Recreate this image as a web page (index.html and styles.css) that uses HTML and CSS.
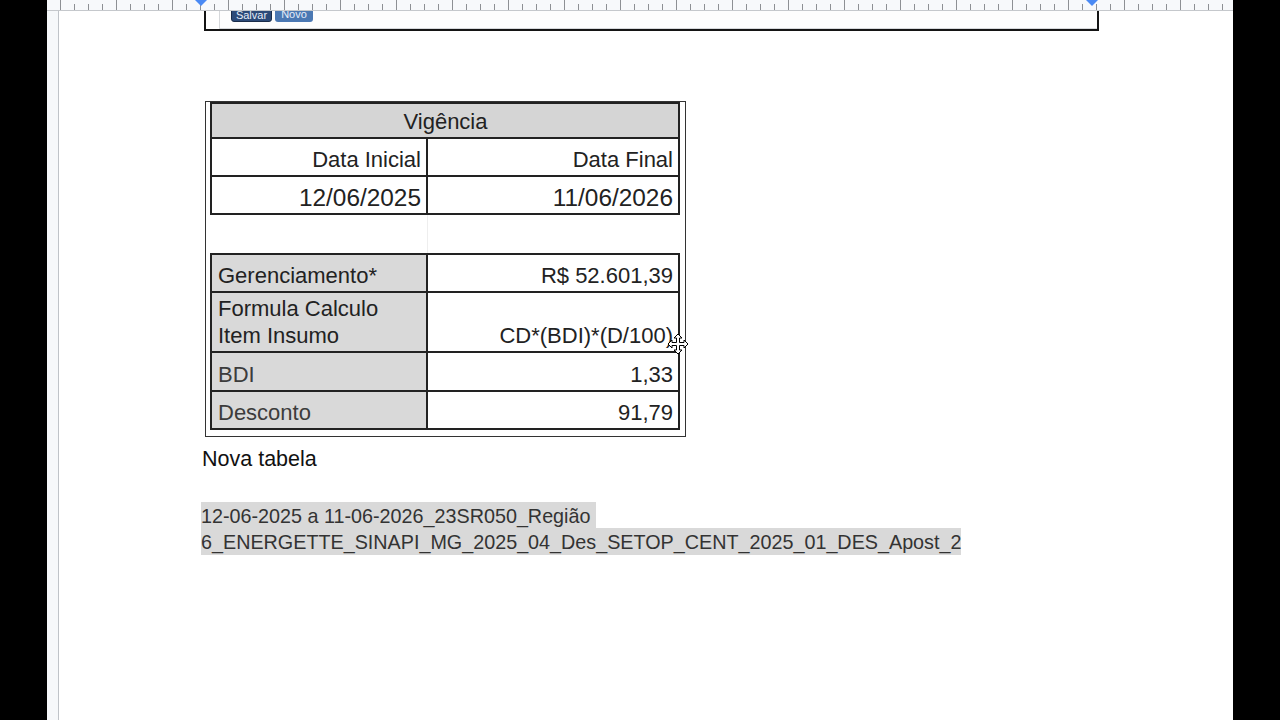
FILE: index.html
```html
<!DOCTYPE html>
<html lang="pt-BR">
<head>
<meta charset="utf-8">
<title>Documento</title>
<link rel="stylesheet" href="styles.css">
</head>
<body>
<div class="screen">
  <div class="side"></div>
  <div class="app">
    <div class="hruler">
      <span class="marker marker-left"></span>
      <span class="marker marker-right"></span>
    </div>
    <div class="workspace">
      <div class="vruler"></div>
      <div class="canvas">
        <div class="formbox">
          <div class="formbox-inner">
            <span class="btn btn-save">Salvar</span>
            <span class="btn btn-new">Novo</span>
          </div>
        </div>

        <div class="frame">
          <div class="grid">
            <div class="c head">Vigência</div>
            <div class="c r">Data Inicial</div>
            <div class="c r">Data Final</div>
            <div class="c r date">12/06/2025</div>
            <div class="c r date">11/06/2026</div>
          </div>
          <div class="gap"><div class="gap-col"></div></div>
          <div class="grid">
            <div class="c lab row-a">Gerenciamento*</div>
            <div class="c r row-a">R$ 52.601,39</div>
            <div class="c lab row-b">Formula Calculo<br>Item Insumo</div>
            <div class="c r row-b">CD*(BDI)*(D/100)</div>
            <div class="c lab row-c soft">BDI</div>
            <div class="c r row-c">1,33</div>
            <div class="c lab row-d soft">Desconto</div>
            <div class="c r row-d">91,79</div>
          </div>
          <svg class="cursor" width="22" height="22" viewBox="0 0 22 22" aria-hidden="true">
            <path d="M11 1 L15 5 H12.5 V9.5 H17 V7 L21 11 L17 15 V12.5 H12.5 V17 H15 L11 21 L7 17 H9.5 V12.5 H5 V15 L1 11 L5 7 V9.5 H9.5 V5 H7 Z" fill="#fff" stroke="#000" stroke-width="1" stroke-linejoin="miter"/>
          </svg>
        </div>

        <p class="para-title">Nova tabela</p>
        <p class="sel"><span>12-06-2025 a 11-06-2026_23SR050_Região 6_ENERGETTE_SINAPI_MG_2025_04_Des_SETOP_CENT_2025_01_DES_Apost_2</span></p>
      </div>
    </div>
  </div>
  <div class="side"></div>
</div>
</body>
</html>
```
FILE: styles.css
```css
html, body {
  margin: 0;
  padding: 0;
  background: #000;
}

body {
  font-family: "Liberation Sans", Arial, sans-serif;
}

.screen {
  display: flex;
  width: 1280px;
  height: 720px;
  overflow: hidden;
}

.side {
  width: 47px;
  flex: none;
  background: #000;
}

.app {
  width: 1186px;
  flex: none;
  position: relative;
  background: #fff;
  overflow: hidden;
}

/* top ruler, overlays the document */
.hruler {
  position: absolute;
  top: 0;
  left: 0;
  right: 0;
  height: 10px;
  border-bottom: 1px solid #c5c8cc;
  background-color: #f7f9fb;
  background-image:
    repeating-linear-gradient(to right, transparent 0 13px, #8d9094 13px 14px, transparent 14px 56px),
    repeating-linear-gradient(to right, transparent 0 13px, #8d9094 13px 14px);
  background-size: 100% 10px, 100% 6px;
  background-position: left top, left bottom;
  background-repeat: no-repeat;
  z-index: 2;
}

.marker {
  position: absolute;
  top: 0;
  width: 0;
  height: 0;
  border-left: 6px solid transparent;
  border-right: 6px solid transparent;
  border-top: 6px solid #4a8af4;
}

.marker-left { left: 148px; }
.marker-right { left: 1039px; }

.workspace {
  display: flex;
  height: 720px;
}

.vruler {
  width: 11px;
  flex: none;
  background: #f6f8fa;
  border-right: 1px solid #bfc3c8;
}

.canvas {
  flex: 1;
  padding-left: 141px;
  background: #fff;
}

/* form box cut off at the top */
.formbox {
  margin: -20px 0 0 4px;
  width: 895px;
  height: 51px;
  box-sizing: border-box;
  border: 2px solid #141414;
  display: flex;
}

.formbox-inner {
  flex: 1;
  margin-left: 13px;
  height: 47px;
  box-sizing: border-box;
  border-left: 1px solid #d6d8db;
  border-bottom: 1px solid #d6d8db;
  background: #fdfdfd;
  display: flex;
  align-items: flex-end;
  gap: 3px;
  padding: 0 0 6px 11px;
}

.btn {
  height: 16px;
  box-sizing: border-box;
  font-size: 11px;
  line-height: 16px;
  text-align: center;
  color: #e6edf8;
  border-radius: 0 0 3px 3px;
}

.btn-save {
  width: 41px;
  background: #2c4a78;
  border: 1px solid #1a2c4a;
}

.btn-new {
  width: 38px;
  background: #4b78b3;
}

/* table */
.frame {
  position: relative;
  margin: 70px 0 0 5px;
  width: 481px;
  box-sizing: border-box;
  border: 1px solid #333;
  padding: 0 5px 6px 4px;
  background: #fff;
}

.grid {
  display: grid;
  grid-template-columns: 216px 252px;
  border-top: 2px solid #222;
  border-left: 2px solid #222;
}

.c {
  box-sizing: border-box;
  border-right: 2px solid #222;
  border-bottom: 2px solid #222;
  display: flex;
  align-items: flex-end;
  padding: 0 5px 2px 6px;
  font-size: 22px;
  line-height: 27px;
  color: #222;
  height: 38px;
}

.c.r {
  justify-content: flex-end;
  text-align: right;
}

.head {
  grid-column: 1 / -1;
  justify-content: center;
  background: #d5d5d5;
  height: 35px;
}

.date {
  font-size: 24.4px;
}

.lab {
  background: #d9d9d9;
}

.soft {
  color: #3c3c3c;
}

.row-a { height: 38px; }
.row-b { height: 60px; }
.row-c { height: 39px; }
.row-d { height: 38px; }

.gap {
  height: 38px;
  display: flex;
}

.gap-col {
  width: 217px;
  border-right: 1px solid #eeeeee;
}

.cursor {
  position: absolute;
  left: 461px;
  top: 231px;
}

.para-title {
  margin: 9px 0 0 2px;
  font-size: 21.5px;
  line-height: 27px;
  color: #111;
}

.sel {
  margin: 29px 0 0 1px;
  font-size: 19.75px;
  line-height: 26.5px;
  color: #333;
  width: 1000px;
  white-space: break-spaces;
}

.sel span {
  background: #d9d9d9;
  padding: 2.5px 0;
}
```
